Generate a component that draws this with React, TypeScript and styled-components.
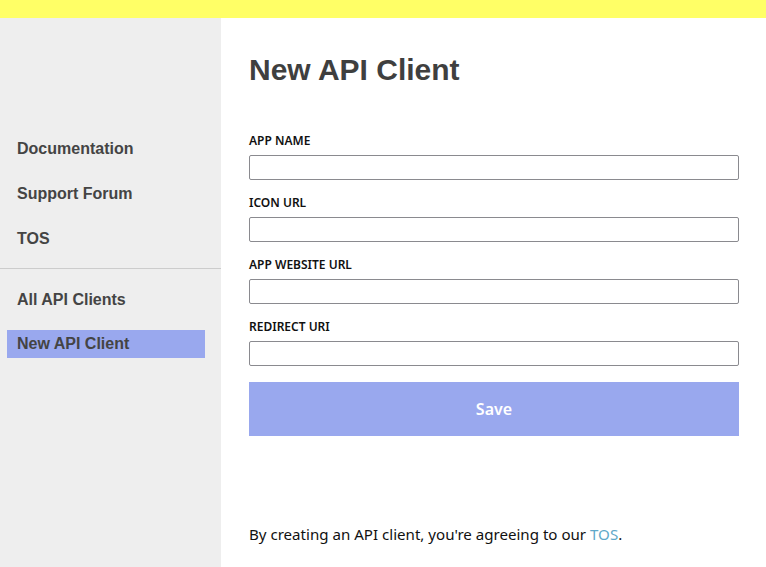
import React from "react";
import styled, { createGlobalStyle } from "styled-components";

const Global = createGlobalStyle`
  html, body { margin: 0; padding: 0; height: 100%; }
  body { font-family: "Liberation Sans", Arial, sans-serif; background: #fff; }
  #root { min-height: 100vh; display: flex; flex-direction: column; }
  * { box-sizing: border-box; }
`;

const TopBar = styled.div`
  height: 18px;
  background: #ffff66;
  flex: none;
`;

const Layout = styled.div`
  flex: 1;
  display: grid;
  grid-template-columns: 221px 1fr;
`;

const Sidebar = styled.nav`
  background: #eeeeee;
  padding-top: 117px;
  display: flex;
  flex-direction: column;
`;

const NavGroup = styled.div<{ $gap: number }>`
  display: flex;
  flex-direction: column;
  gap: ${(p) => p.$gap}px;
  padding: 0 16px 0 7px;
`;

const NavItem = styled.a<{ $active?: boolean }>`
  display: flex;
  align-items: center;
  height: 28px;
  padding-left: 10px;
  font-family: "Liberation Sans", Arial, sans-serif;
  font-weight: bold;
  font-size: 16px;
  color: #444;
  text-decoration: none;
  background: ${(p) => (p.$active ? "#99a8ee" : "transparent")};
`;

const Divider = styled.hr`
  border: none;
  border-top: 1px solid #cccccc;
  margin: 15px 0 17px;
  width: 100%;
`;

const Main = styled.main`
  padding: 34px 27px 0 28px;
  display: flex;
  flex-direction: column;
`;

const Title = styled.h1`
  margin: 0 0 45px;
  font-family: "Liberation Sans", Arial, sans-serif;
  font-weight: bold;
  font-size: 30px;
  line-height: 36px;
  color: #3f3f3f;
`;

const Form = styled.form`
  display: flex;
  flex-direction: column;
`;

const Field = styled.div`
  display: flex;
  flex-direction: column;
  gap: 6px;
  margin-bottom: 15px;
`;

const Label = styled.label`
  font-family: "Noto Sans", sans-serif;
  font-weight: 600;
  font-size: 12px;
  line-height: 16px;
  color: #111;
`;

const Input = styled.input`
  height: 25px;
  border: 1px solid #8a8a8f;
  border-radius: 2px;
  width: 100%;
  background: #fff;
`;

const SaveButton = styled.button`
  margin-top: 1px;
  height: 54px;
  width: 100%;
  border: none;
  background: #99a8ee;
  color: #fff;
  font-family: "Noto Sans", sans-serif;
  font-weight: 600;
  font-size: 16px;
`;

const Footer = styled.p`
  margin: 88px 0 0;
  font-family: "Noto Sans", sans-serif;
  font-weight: 400;
  font-size: 15.1px;
  color: #111;
`;

const Link = styled.a`
  color: #5fa8c9;
  text-decoration: none;
`;

const fields = ["APP NAME", "ICON URL", "APP WEBSITE URL", "REDIRECT URI"];

export default function App() {
  return (
    <>
      <Global />
      <TopBar />
      <Layout>
        <Sidebar>
          <NavGroup $gap={17}>
            <NavItem>Documentation</NavItem>
            <NavItem>Support Forum</NavItem>
            <NavItem>TOS</NavItem>
          </NavGroup>
          <Divider />
          <NavGroup $gap={16}>
            <NavItem>All API Clients</NavItem>
            <NavItem $active>New API Client</NavItem>
          </NavGroup>
        </Sidebar>
        <Main>
          <Title>New API Client</Title>
          <Form onSubmit={(e) => e.preventDefault()}>
            {fields.map((f) => (
              <Field key={f}>
                <Label>{f}</Label>
                <Input type="text" />
              </Field>
            ))}
            <SaveButton type="submit">Save</SaveButton>
          </Form>
          <Footer>
            By creating an API client, you're agreeing to our <Link>TOS</Link>.
          </Footer>
        </Main>
      </Layout>
    </>
  );
}
